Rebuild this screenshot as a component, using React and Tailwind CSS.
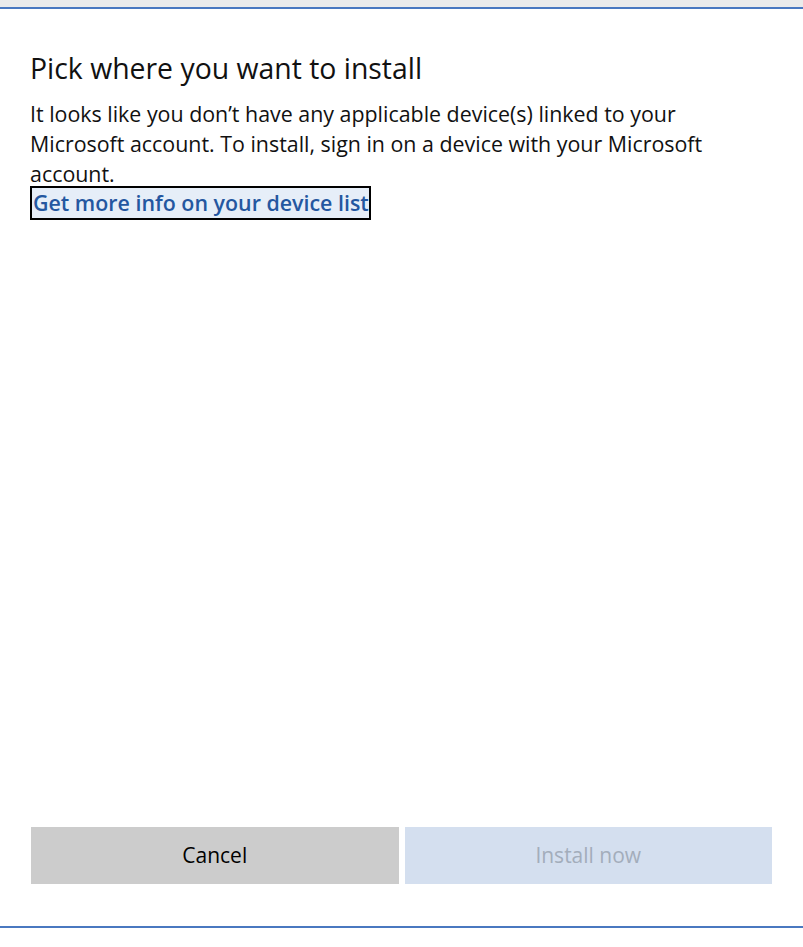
import * as React from 'react';

export default function App() {
  return (
    <div
      className="flex h-[947px] w-[803px] flex-col bg-white text-black"
      style={{ fontFamily: '"Open Sans", "Noto Sans", sans-serif' }}
    >
      <div className="h-[9px] shrink-0 border-b-2 border-[#4a78c0] bg-[#ebebeb]" />

      <div className="flex flex-1 flex-col px-[30px]">
        <h1 className="mt-[41px] text-[28.4px] leading-[36px] font-normal text-[#111]">
          Pick where you want to install
        </h1>
        <p className="mt-[13px] text-[21.4px] leading-[30px] text-[#111]">
          It looks like you don’t have any applicable device(s) linked to your
          <br />
          Microsoft account. To install, sign in on a device with your Microsoft
          <br />
          account.
        </p>
        <div className="-mt-[3px]">
          <a
            href="#"
            className="inline-block h-[34px] border-2 border-black bg-[#e6eef8] pr-0 pl-[1px] text-[21.4px] leading-[29px] font-semibold text-[#2457a0]"
          >
            Get more info on your device list
          </a>
        </div>

        <div className="flex-1" />

        <div className="flex gap-[6px] pl-[1px] pr-[1px]">
          <button className="h-[57px] flex-1 bg-[#cccccc] text-[21px] text-black">
            Cancel
          </button>
          <button className="h-[57px] flex-1 bg-[#d4dfef] text-[21px] text-[#a3adbb]">
            Install now
          </button>
        </div>
        <div className="h-[42px]" />
      </div>

      <div className="h-[2px] shrink-0 bg-[#4a78c0]" />
      <div className="h-[19px] shrink-0" />
    </div>
  );
}
